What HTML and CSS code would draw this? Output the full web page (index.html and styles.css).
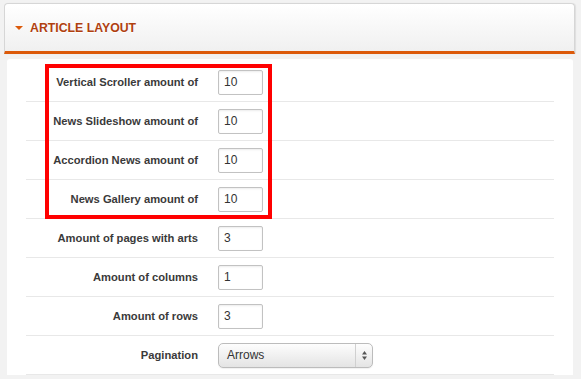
FILE: index.html
```html
<!DOCTYPE html>
<html lang="en">
    <head>
        <link rel="stylesheet" href="styles.css">
        <title>Article Layout</title>
    </head>

    <body>
        <!-- Panel heading -->
        <div class="panel-head">
            <span class="caret"></span>
            <h3>ARTICLE LAYOUT</h3>
        </div>

        <div class="panel-body">
            <div class="row">
                <label>Vertical Scroller amount of</label>
                <input class="text" type="text" value="10">
            </div>
            <div class="row">
                <label>News Slideshow amount of</label>
                <input class="text" type="text" value="10">
            </div>
            <div class="row">
                <label>Accordion News amount of</label>
                <input class="text" type="text" value="10">
            </div>
            <div class="row">
                <label>News Gallery amount of</label>
                <input class="text" type="text" value="10">
            </div>
            <div class="row">
                <label>Amount of pages with arts</label>
                <input class="text" type="text" value="3">
            </div>
            <div class="row">
                <label>Amount of columns</label>
                <input class="text" type="text" value="1">
            </div>
            <div class="row">
                <label>Amount of rows</label>
                <input class="text" type="text" value="3">
            </div>
            <div class="row">
                <label>Pagination</label>
                <div class="select">
                    <span class="value">Arrows</span>
                    <span class="arrows">
                        <svg width="7" height="11" viewBox="0 0 7 11">
                            <path d="M3.5 1 L6 4.5 L1 4.5 Z" fill="#555"/>
                            <path d="M3.5 10 L6 6.5 L1 6.5 Z" fill="#555"/>
                        </svg>
                    </span>
                </div>
            </div>

            <!-- highlight drawn over the first four rows -->
            <div class="highlight"></div>
        </div>
    </body>
</html>
```

FILE: styles.css
```css
* {
    box-sizing: border-box;
}
body {
    margin: 0;
    background: #f2f2f2;
    font-family: 'Liberation Sans', Helvetica, Arial, sans-serif;
    color: #333;
}
.panel-head {
    display: flex;
    align-items: center;
    height: 51px;
    margin: 3px 6px 0 4px;
    padding-left: 10px;
    background: linear-gradient(#fff, #f0f0f0);
    border: 1px solid #d6d6d6;
    border-bottom: 3px solid #dc5a0a;
    border-radius: 4px 4px 0 0;
    box-shadow: 1px 0 1px rgba(0, 0, 0, 0.08);
}
.panel-head .caret {
    width: 0;
    height: 0;
    margin: 1px 7px 0 0;
    border-left: 4px solid transparent;
    border-right: 4px solid transparent;
    border-top: 4px solid #dc5a0a;
}
.panel-head h3 {
    margin: 0;
    font-size: 12.3px;
    font-weight: bold;
    color: #b0400f;
    text-shadow: 0 1px 0 #fff;
}
.panel-body {
    position: relative;
    margin: 5px 8px 0 7px;
    padding-top: 4px;
    background: #fff;
    border-radius: 3px 3px 0 0;
}
.row {
    display: flex;
    align-items: center;
    height: 39px;
    margin: 0 19px;
    border-bottom: 1px solid #e8e8e8;
}
.row label {
    width: 172px;
    margin-right: 20px;
    text-align: right;
    font-size: 11.2px;
    font-weight: bold;
    color: #3a3a3a;
}
.row input.text {
    width: 45px;
    height: 25px;
    padding: 0 5px;
    font-family: 'Liberation Sans', Helvetica, Arial, sans-serif;
    font-size: 12px;
    color: #333;
    border: 1px solid #c2c2c2;
    border-radius: 2px;
    box-shadow: inset 0 1px 2px rgba(0, 0, 0, 0.08);
    outline: none;
}
.select {
    display: flex;
    align-items: center;
    width: 155px;
    height: 25px;
    border: 1px solid #bcbcbc;
    border-radius: 5px;
    background: linear-gradient(#fdfdfd, #e4e4e4);
    box-shadow: 0 1px 1px rgba(0, 0, 0, 0.06);
    font-size: 12px;
    color: #333;
}
.select .value {
    flex: 1;
    padding-left: 8px;
}
.select .arrows {
    display: flex;
    align-items: center;
    justify-content: center;
    width: 17px;
    height: 100%;
    border-left: 1px solid #d0d0d0;
}
.highlight {
    position: absolute;
    left: 38px;
    top: 5px;
    width: 227px;
    height: 155px;
    border: 4px solid #f00;
}
```
